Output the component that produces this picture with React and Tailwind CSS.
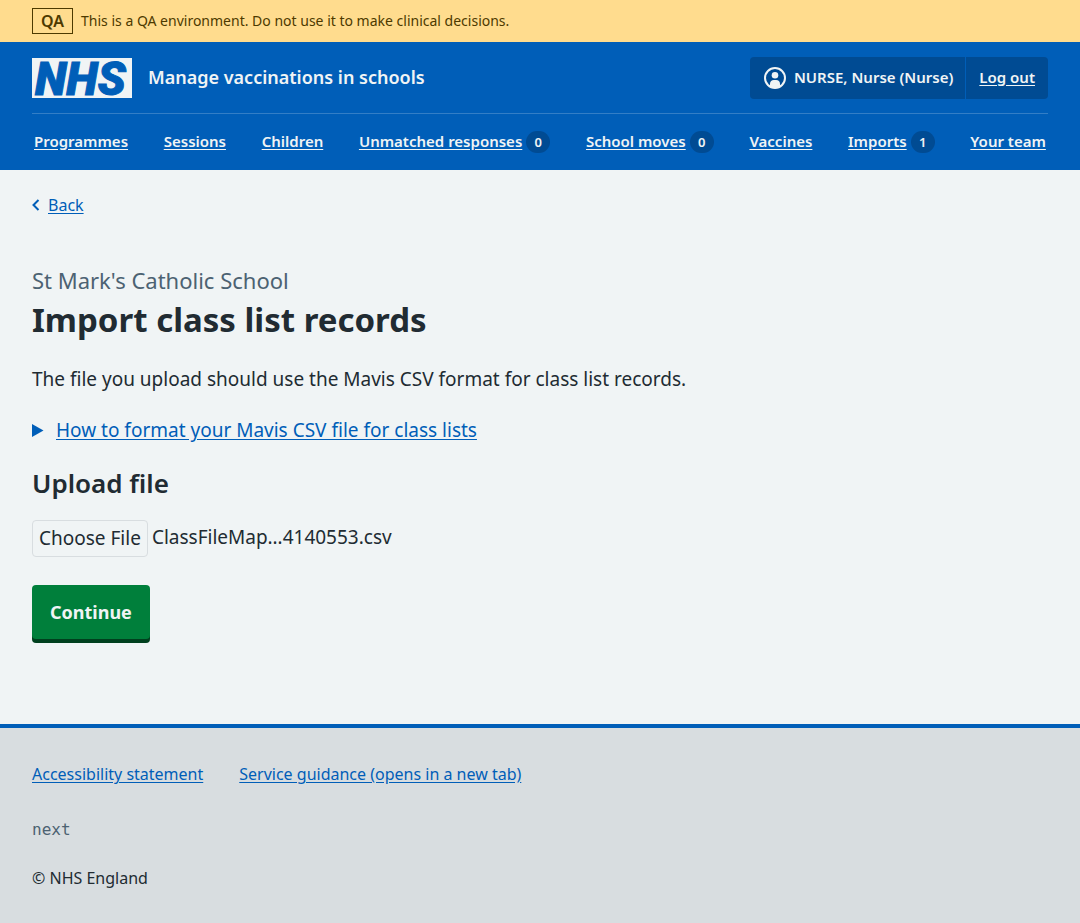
import { useState } from "react";

const navItems = [
  { label: "Programmes" },
  { label: "Sessions" },
  { label: "Children" },
  { label: "Unmatched responses", count: 0 },
  { label: "School moves", count: 0 },
  { label: "Vaccines" },
  { label: "Imports", count: 1 },
  { label: "Your team" },
];

function EnvironmentBanner() {
  return (
    <div className="flex items-center gap-2 bg-[#ffdc8e] px-8 py-2 text-[#4d3a00]">
      <strong className="border border-[#4d3a00] px-2 text-base leading-6 font-semibold">QA</strong>
      <span className="text-sm leading-6">
        This is a QA environment. Do not use it to make clinical decisions.
      </span>
    </div>
  );
}

function Logo() {
  return (
    <svg viewBox="0 0 100 40" className="h-10 w-[100px] overflow-visible" role="img" aria-label="NHS">
      <rect width="100" height="40" fill="#f0f4f5" />
      <text
        x="3"
        y="36.500"
        fill="#005eb8"
        stroke="#005eb8"
        strokeWidth="1"
        fontFamily="Roboto, sans-serif"
        fontSize="46"
        fontWeight="900"
        fontStyle="italic"
      >
        NHS
      </text>
    </svg>
  );
}

function UserIcon() {
  return (
    <svg viewBox="0 0 22 22" className="size-[22px]" aria-hidden="true">
      <circle cx="11" cy="11" r="10" fill="none" stroke="#f0f4f5" strokeWidth="2" />
      <circle cx="11" cy="8.2" r="3.3" fill="#f0f4f5" />
      <path d="M6 20v-3.200c0-2.200 1.700-3.800 3.800-3.800h2.400c2.100 0 3.800 1.600 3.800 3.800V20c-1.500.700-3.200 1-5 1s-3.500-.300-5-1z" fill="#f0f4f5" />
    </svg>
  );
}

function Header() {
  return (
    <header className="bg-[#005eb8] px-8 text-[#f0f4f5]">
      <div className="flex items-center justify-between border-b border-[#337ec6] pt-[15px] pb-[14px]">
        <a href="#home" className="flex items-center gap-4">
          <Logo />
          <span className="pb-[2px] text-lg leading-7 font-semibold">Manage vaccinations in schools</span>
        </a>
        <div className="flex rounded bg-[#004b93] text-[15px] leading-10 font-semibold">
          <span className="flex items-center gap-2 border-r border-[#005eb8] pr-3 pl-[14px]">
            <UserIcon />
            <span className="pb-[2px]">NURSE, Nurse (Nurse)</span>
          </span>
          <a href="#logout" className="px-[13px] pb-[2px] underline underline-offset-2">
            Log out
          </a>
        </div>
      </div>
      <nav aria-label="Menu">
        <ul className="flex justify-between px-[2px] pt-[17px] pb-[17px] text-[15px] leading-6 font-semibold">
          {navItems.map(({ label, count }) => (
            <li key={label}>
              <a href={"#" + label.toLowerCase().replace(" ", "-")} className="flex items-center gap-1">
                <span className="-mt-[2px] underline underline-offset-2">{label}</span>
                {count !== undefined && (
                  <span className="h-[22px] w-6 rounded-full bg-[#004b93] text-center text-[13px] leading-[22px]">
                    {count}
                  </span>
                )}
              </a>
            </li>
          ))}
        </ul>
      </nav>
    </header>
  );
}

function UploadForm() {
  const [fileName, setFileName] = useState("ClassFileMap…4140553.csv");
  return (
    <form onSubmit={(event) => event.preventDefault()}>
      <h2 className="mt-[23px] text-[26px] leading-8 font-semibold">Upload file</h2>
      <div className="mt-[21px] flex items-start gap-1 text-[19px] leading-[27px]">
        <input
          id="file"
          type="file"
          className="peer sr-only"
          onChange={(event) => setFileName(event.target.files[0]?.name ?? "")}
        />
        <label
          htmlFor="file"
          className="cursor-pointer rounded border border-[#d8dde0] px-[6px] py-1 peer-focus:outline-2"
        >
          Choose File
        </label>
        <output htmlFor="file" className="py-1">{fileName}</output>
      </div>
      <button
        type="submit"
        className="mt-7 mb-1 rounded bg-[#007f3b] px-[18px] py-[13px] text-lg leading-7 font-bold text-[#f0f4f5] shadow-[0_4px_0_#00401e]"
      >
        Continue
      </button>
    </form>
  );
}

export default function App() {
  return (
    <div className="flex min-h-screen flex-col bg-[#f0f4f5] font-['Noto_Sans',sans-serif] text-[#212b32]">
      <EnvironmentBanner />
      <Header />
      <main className="grow px-8 pt-[23px] pb-20">
        <a href="#back" className="flex w-fit items-center gap-2 text-base leading-6 text-[#005eb8]">
          <svg viewBox="0 0 8 12" className="h-3 w-2" fill="none" stroke="currentColor" strokeWidth="2" aria-hidden="true">
            <path d="M6.500 1 1.500 6l5 5" />
          </svg>
          <span className="underline underline-offset-2">Back</span>
        </a>
        <h1 className="mt-[47px] text-[33px] leading-[48px] font-bold">
          <span className="block text-[22px] leading-8 font-normal text-[#4c6272]">St Mark's Catholic School</span>
          Import class list records
        </h1>
        <p className="mt-[21px] text-[19px] leading-7">
          The file you upload should use the Mavis CSV format for class list records.
        </p>
        <details className="mt-[23px] text-[19px] leading-7">
          <summary className="flex w-fit cursor-pointer items-center gap-3 text-[#005eb8]">
            <svg viewBox="0 0 12 13" className="h-[13px] w-3" aria-hidden="true">
              <path d="M0 0v13l11.500-6.500z" fill="currentColor" />
            </svg>
            <span className="underline underline-offset-2">How to format your Mavis CSV file for class lists</span>
          </summary>
        </details>
        <UploadForm />
      </main>
      <footer className="border-t-4 border-[#005eb8] bg-[#d8dde0] px-8 pt-[34px] pb-[33px] text-base leading-6">
        <ul className="flex gap-9 text-[#005eb8]">
          <li>
            <a href="#accessibility" className="underline underline-offset-2">Accessibility statement</a>
          </li>
          <li>
            <a href="#guidance" className="underline underline-offset-2">Service guidance (opens in a new tab)</a>
          </li>
        </ul>
        <p className="mt-8 font-['DejaVu_Sans_Mono',monospace] text-[#4c6272]">next</p>
        <p className="mt-6">© NHS England</p>
      </footer>
    </div>
  );
}
